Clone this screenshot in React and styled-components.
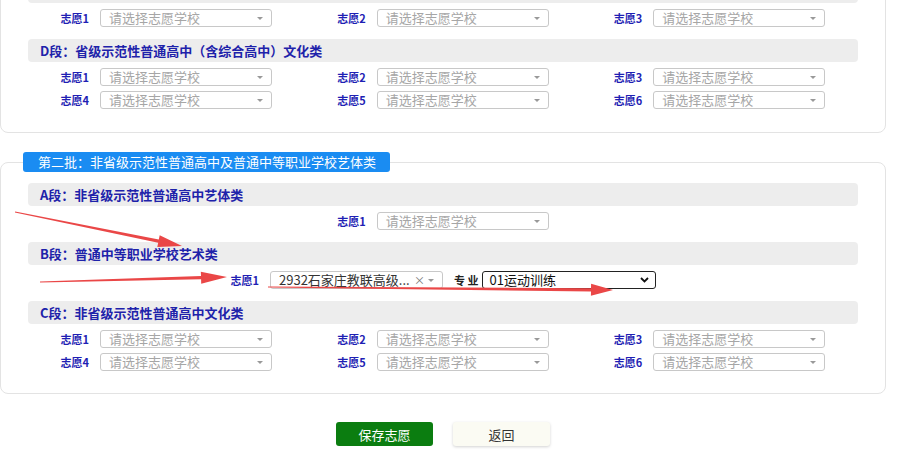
import React from 'react';
import styled, { createGlobalStyle } from 'styled-components';

const GlobalStyle = createGlobalStyle`
  body {
    margin: 0;
    background: #fff;
    font-family: "Noto Sans CJK SC", "Noto Sans", sans-serif;
  }
`;

const Root = styled.div`
  position: relative;
  display: flow-root;
  width: 922px;
  height: 469px;
  overflow: hidden;
`;

// the page is scrolled a little, so the first card starts above the window
const Page = styled.div`
  width: 886px;
  margin-top: -33px;
`;

const Card = styled.div`
  box-sizing: border-box;
  border: 1px solid #e3e3e3;
  border-radius: 8px;
  padding: 12px 27px 23px;
`;

const Batch = styled.fieldset`
  box-sizing: border-box;
  width: 886px;
  margin: 19px 0 0;
  padding: 0 27px 22px;
  border: 1px solid #e3e3e3;
  border-radius: 8px;
  min-inline-size: 0;
`;

const Legend = styled.legend`
  margin-left: -5px;
  padding: 0 14px 0 15px;
  height: 20px;
  line-height: 20px;
  background: #1a8cf2;
  border-radius: 3px;
  color: #fff;
  font-size: 13px;
`;

const SectionHead = styled.div`
  height: 23px;
  margin-top: ${(p) => (p.$first ? '0' : '12px')};
  padding-left: 12px;
  background: #ededed;
  border-radius: 4px;
  color: #1e22aa;
  font-size: 13px;
  font-weight: 700;
  line-height: 23px;
  white-space: nowrap;
  overflow: hidden;
`;

const Rows = styled.div`
  display: flex;
  flex-direction: column;
  gap: 5px;
  margin-top: 6px;
`;

const GridRow = styled.div`
  display: grid;
  grid-template-columns: repeat(3, 1fr);
  height: 18px;
`;

const CenterRow = styled.div`
  display: flex;
  justify-content: center;
  align-items: center;
  height: 18px;
`;

const Field = styled.div`
  display: flex;
  align-items: center;
`;

const Label = styled.span`
  width: ${(p) => (p.$w ? p.$w + 'px' : 'auto')};
  margin-right: ${(p) => (p.$gap ?? 11)}px;
  margin-left: ${(p) => p.$ml || 0}px;
  text-align: right;
  color: ${(p) => (p.$dark ? '#222' : '#1f1fb4')};
  font-size: 11px;
  font-weight: 700;
  white-space: pre;
`;

const SelectBox = styled.div`
  position: relative;
  box-sizing: border-box;
  width: ${(p) => p.$w || 172}px;
  height: 18px;
  padding-left: 8px;
  border: 1px solid #c8c8c8;
  border-radius: 3px;
  background: #fff;
  color: ${(p) => (p.$filled ? '#333' : '#a6a6a6')};
  font-size: 13px;
  line-height: 16px;
  white-space: nowrap;

  &::after {
    content: '';
    position: absolute;
    right: 8px;
    top: 7px;
    border-left: 3px solid transparent;
    border-right: 3px solid transparent;
    border-top: 3px solid #999;
  }
`;

const Clear = styled.span`
  position: absolute;
  right: 17px;
  top: 0;
  color: #777;
  font-size: 11px;
`;

const NativeSelect = styled.div`
  display: flex;
  align-items: center;
  justify-content: space-between;
  box-sizing: border-box;
  width: 174px;
  height: 18px;
  padding: 0 6px 0 7px;
  border: 1px solid #222;
  border-radius: 3px;
  color: #111;
  font-size: 13px;
  line-height: 16px;
`;

const Buttons = styled.div`
  display: flex;
  justify-content: center;
  gap: 20px;
  margin-top: 28px;
`;

const Button = styled.button`
  width: 97px;
  height: 24px;
  border: none;
  border-radius: 3px;
  font-family: inherit;
  font-size: 13px;
  background: ${(p) => (p.$primary ? '#0b7d10' : '#fbfbf3')};
  color: ${(p) => (p.$primary ? '#fff' : '#333')};
  box-shadow: ${(p) => (p.$primary ? 'none' : '0 1px 3px rgba(0,0,0,0.18)')};
`;

const Overlay = styled.svg`
  position: absolute;
  left: 0;
  top: 0;
  pointer-events: none;
`;

const Choice = ({ n }) => (
  <Field>
    <Label $w={61}>志愿{n}</Label>
    <SelectBox>请选择志愿学校</SelectBox>
  </Field>
);

const TripleRow = ({ from }) => (
  <GridRow>
    <Choice n={from} />
    <Choice n={from + 1} />
    <Choice n={from + 2} />
  </GridRow>
);

// tapered red annotation arrow
function arrowPoints(x1, y1, x2, y2, head, hw, w0, w1) {
  const dx = x2 - x1;
  const dy = y2 - y1;
  const len = Math.hypot(dx, dy);
  const ux = dx / len;
  const uy = dy / len;
  const nx = -uy;
  const ny = ux;
  const bx = x2 - ux * head;
  const by = y2 - uy * head;
  const p = (x, y) => `${x.toFixed(1)},${y.toFixed(1)}`;
  return [
    p(x1 + nx * w0, y1 + ny * w0),
    p(bx + nx * w1, by + ny * w1),
    p(bx + nx * hw, by + ny * hw),
    p(x2, y2),
    p(bx - nx * hw, by - ny * hw),
    p(bx - nx * w1, by - ny * w1),
    p(x1 - nx * w0, y1 - ny * w0),
  ].join(' ');
}

const arrows = [
  [15, 212, 182, 246, 24, 6, 0.5, 1.6],
  [40, 282, 227, 277, 26, 6, 0.5, 1.6],
  [268, 287, 613, 290, 22, 6, 0.6, 1.6],
];

export default function App() {
  return (
    <Root>
      <GlobalStyle />
      <Page>
        <Card>
          {/* header of the previous section, scrolled out of view */}
          <SectionHead $first />
          <Rows>
            <TripleRow from={1} />
          </Rows>
          <SectionHead>D段：省级示范性普通高中（含综合高中）文化类</SectionHead>
          <Rows>
            <TripleRow from={1} />
            <TripleRow from={4} />
          </Rows>
        </Card>

        <Batch>
          <Legend>第二批：非省级示范性普通高中及普通中等职业学校艺体类</Legend>
          <SectionHead style={{ marginTop: 11 }}>A段：非省级示范性普通高中艺体类</SectionHead>
          <Rows>
            <CenterRow>
              <Label>志愿1</Label>
              <SelectBox>请选择志愿学校</SelectBox>
            </CenterRow>
          </Rows>
          <SectionHead>B段：普通中等职业学校艺术类</SectionHead>
          <Rows>
            <CenterRow>
              <Label>志愿1</Label>
              <SelectBox $w={173} $filled>
                2932石家庄教联高级...
                <Clear>×</Clear>
              </SelectBox>
              <Label $dark $ml={11} $gap={3}>专 业</Label>
              <NativeSelect>
                01运动训练
                <svg width="9" height="6" viewBox="0 0 9 6">
                  <path d="M1 1l3.5 3.5L8 1" fill="none" stroke="#111" strokeWidth="1.8" />
                </svg>
              </NativeSelect>
            </CenterRow>
          </Rows>
          <SectionHead>C段：非省级示范性普通高中文化类</SectionHead>
          <Rows>
            <TripleRow from={1} />
            <TripleRow from={4} />
          </Rows>
        </Batch>

        <Buttons>
          <Button $primary>保存志愿</Button>
          <Button>返回</Button>
        </Buttons>
      </Page>

      <Overlay width="922" height="469" viewBox="0 0 922 469">
        {arrows.map((a, i) => (
          <polygon key={i} points={arrowPoints(...a)} fill="#ea4747" />
        ))}
      </Overlay>
    </Root>
  );
}
